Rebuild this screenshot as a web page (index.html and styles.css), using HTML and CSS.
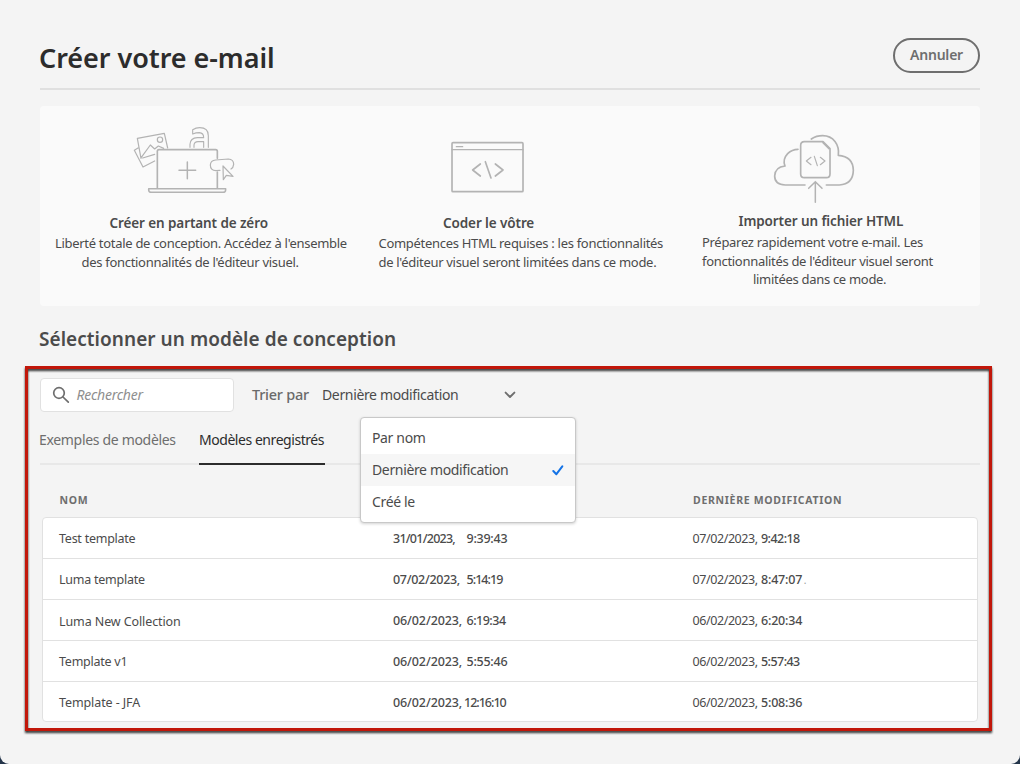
FILE: index.html
```html
<!DOCTYPE html>
<html lang="fr">
<head>
<meta charset="utf-8">
<title>Créer votre e-mail</title>
<link rel="stylesheet" href="styles.css">
</head>
<body>
<div class="page">
  <header class="header">
    <h1 class="title">Créer votre e-mail</h1>
    <button class="cancel">Annuler</button>
  </header>

  <section class="options">
    <article class="option option-scratch">
      <svg class="option-icon" width="130" height="90" viewBox="0 0 390 270">
        <path d="M63 130L52 70L133 55L143 99M54 99L43 106L69 156L104 138M64 127L91 90L104 102L115 93L131 100M68 129L104 118"/>
        <circle cx="120" cy="74" r="8"/>
        <path d="M210 97V88Q211 69 232 68H251Q251 54 238 53Q228 53 218 57V44Q228 38 239 38Q265 38 265 62V97M222 97V90Q223 80 234 80H251V97" stroke-width="3.4"/>
        <path d="M112 219V109Q112 104 117 104H287Q292 104 292 109V130M292 171V219" stroke-width="5"/>
        <path d="M86 221H317V224Q317 232 309 232H94Q86 232 86 224ZM177 166H227M202 141V191" stroke-width="4.5"/>
        <path d="M300 166L288 167Q271 166 271 150Q272 136 287 135L325 132Q341 133 341 148Q340 158 333 162"/>
        <path d="M309 153L310 194L319 181L339 184Z"/>
      </svg>
      <h2 class="option-title">Créer en partant de zéro</h2>
      <p class="option-text"><span class="line">Liberté totale de conception. Accédez à l'ensemble</span> <span class="line line-second">des fonctionnalités de l'éditeur visuel.</span></p>
    </article>
    <article class="option option-code">
      <svg class="option-icon" width="120" height="80" viewBox="0 0 360 240">
        <rect x="66" y="53" width="213" height="147" rx="3" stroke-width="5"/>
        <path d="M66 74H279M79 65H98" stroke-width="4"/>
        <path d="M151 117L128 135L151 153M196 117L219 135L196 153M166 110L183 159" stroke-width="5"/>
      </svg>
      <h2 class="option-title">Coder le vôtre</h2>
      <p class="option-text"><span class="line">Compétences HTML requises : les fonctionnalités</span> <span class="line line-second">de l'éditeur visuel seront limitées dans ce mode.</span></p>
    </article>
    <article class="option option-import">
      <svg class="option-icon" width="110" height="80" viewBox="0 0 330 240">
        <path d="M135 180H76Q44 179 44 153Q45 126 75 123Q67 103 83 86Q96 73 114 73M154 42Q169 32 188 32C220 32 239 59 235 91Q279 94 280 136Q279 178 238 180H199" stroke-width="5"/>
        <path d="M133 50H189L210 71V147Q210 158 199 158H133Q122 158 122 147V61Q122 50 133 50Z" stroke-width="5"/>
        <path d="M189 53L207 71" stroke-width="5"/>
        <path d="M153 97L139 108L153 119M181 97L195 108L181 119M163 94L172 122" stroke-width="3.5"/>
        <path d="M166 232V170M146 190L166 170L186 190" stroke-width="4.5"/>
      </svg>
      <h2 class="option-title">Importer un fichier HTML</h2>
      <p class="option-text"><span class="line">Préparez rapidement votre e-mail. Les</span> <span class="line">fonctionnalités de l'éditeur visuel seront</span> <span class="line line-last">limitées dans ce mode.</span></p>
    </article>
  </section>

  <h2 class="section-title">Sélectionner un modèle de conception</h2>

  <section class="templates">
    <div class="toolbar">
      <label class="search">
        <svg width="18" height="18" viewBox="0 0 18 18"><circle cx="7" cy="7" r="5.3"/><path d="M11 11L16.3 16.2"/></svg>
        <span class="placeholder">Rechercher</span>
      </label>
      <span class="sort-label">Trier par</span>
      <div class="sort">
        <span class="sort-value">Dernière modification</span>
        <svg class="chevron" width="12" height="8" viewBox="0 0 12 8"><path d="M1.6 1.6L6 6L10.4 1.6"/></svg>
        <ul class="menu">
          <li class="menu-item">Par nom</li>
          <li class="menu-item menu-item-selected">Dernière modification
            <svg width="12" height="11" viewBox="0 0 12 11"><path d="M1.3 6L4.4 9.2L10.3 1.4"/></svg>
          </li>
          <li class="menu-item">Créé le</li>
        </ul>
      </div>
    </div>
    <nav class="tabs">
      <span class="tab">Exemples de modèles</span>
      <span class="tab tab-active">Modèles enregistrés</span>
    </nav>
    <div class="columns table-head"><span>NOM</span><span></span><span>DERNIÈRE MODIFICATION</span></div>
    <div class="table">
      <div class="columns row"><span class="name tight">Test template</span><span class="created"><span class="date d31">31/01/2023,</span><span class="t1">9:39:43</span></span><span class="modified"><span class="date">07/02/2023,</span><span class="time tight">9:42:18</span></span></div>
      <div class="columns row"><span class="name tight">Luma template</span><span class="created"><span class="date d07">07/02/2023,</span><span class="t2">5:14:19</span></span><span class="modified"><span class="date">07/02/2023,</span><span class="time">8:47:07</span><span class="speck">.</span></span></div>
      <div class="columns row"><span class="name name-low">Luma New Collection</span><span class="created"><span class="date">06/02/2023,</span><span class="t3">6:19:34</span></span><span class="modified"><span class="date">06/02/2023,</span><span class="time">6:20:34</span></span></div>
      <div class="columns row"><span class="name tight">Template v1</span><span class="created"><span class="date">06/02/2023,</span><span class="t1">5:55:46</span></span><span class="modified"><span class="date">06/02/2023,</span><span class="time tight">5:57:43</span></span></div>
      <div class="columns row"><span class="name">Template - JFA</span><span class="created"><span class="date">06/02/2023,</span><span class="t5">12:16:10</span></span><span class="modified"><span class="date">06/02/2023,</span><span class="time">5:08:36</span></span></div>
    </div>
  </section>
  <div class="highlight"></div>
</div>
</body>
</html>
```
FILE: styles.css
```css
* { box-sizing: border-box; }
body { margin: 0; background: #24354a; font-family: "Noto Sans", sans-serif; color: #4b4b4b; }
h1, h2, p, ul { margin: 0; padding: 0; }
svg { fill: none; stroke-linecap: round; stroke-linejoin: round; flex: none; }
.page { position: relative; height: 764px; padding: 0 40px; background: #f4f4f4; border-radius: 0 0 9px 9px; overflow: hidden; }

.header { height: 90px; display: flex; justify-content: space-between; align-items: flex-start; border-bottom: 2px solid #e0e0e0; }
.title { margin: 38px 0 0 -1px; font-size: 27px; line-height: 40px; font-weight: 600; letter-spacing: -.05px; color: #2c2c2c; }
.cancel { margin-top: 38px; width: 87px; height: 35px; padding: 0 0 1px; border: 2px solid #6e6e6e; border-radius: 18px; background: none; font: 600 14px/20px "Noto Sans", sans-serif; letter-spacing: -.2px; color: #6e6e6e; }

.options { margin-top: 16px; height: 200px; display: grid; grid-template-columns: 323.5px 323.5px 1fr; background: #fafafa; border-radius: 4px; }
.option { padding-left: 15px; display: flex; flex-direction: column; align-items: flex-start; white-space: nowrap; }
.option-icon { stroke: #b3b3b3; stroke-width: 3.6; }
.option-title { margin-top: 8px; font-size: 13.5px; line-height: 20px; font-weight: 600; letter-spacing: -.1px; }
.option-text { font-size: 13px; line-height: 19px; letter-spacing: -.3px; margin-top: 1px; }
.line { display: block; }
.option-scratch .option-icon { margin: 9px 0 0 65px; }
.option-scratch .option-title { margin-left: 54.5px; }
.option-scratch .line-second { margin-left: 26.5px; }
.option-code .option-icon { margin: 19px 0 0 51px; }
.option-code .option-title { margin-left: 64.5px; }
.option-import .option-icon { margin: 19px 0 0 58px; }
.option-import .option-title { margin: 6px 0 0 36.5px; }
.option-import .option-text { line-height: 18.5px; margin-top: 2px; }
.option-import .line-last { margin-left: 51px; }

.section-title { margin: 19px 0 0 -1px; font-size: 19px; line-height: 28px; font-weight: 600; letter-spacing: .05px; }

.toolbar { margin-top: 25px; height: 34px; display: flex; align-items: center; }
.search { width: 194px; height: 34px; padding: 0 0 1px 10.5px; display: flex; align-items: center; gap: 7px; background: #fff; border: 1px solid #e1e1e1; border-radius: 4px; }
.search svg { stroke: #6e6e6e; stroke-width: 1.7; }
.placeholder { padding-bottom: 1px; font-size: 14px; font-style: italic; letter-spacing: -.25px; color: #8e8e8e; }
.sort-label { margin-left: 18px; padding-bottom: 2px; width: 70px; font-size: 14.5px; font-weight: 500; letter-spacing: -.25px; color: #6a6a6a; }
.sort { position: relative; width: 194px; display: flex; justify-content: space-between; align-items: center; font-size: 14px; letter-spacing: -.35px; }
.sort-value { padding-bottom: 2px; }
.chevron { stroke: #6e6e6e; stroke-width: 1.9; }
.menu { position: absolute; z-index: 2; left: 38px; top: 32px; width: 216px; height: 106px; padding-top: 4px; list-style: none; background: #fff; border: 1px solid #c8c8c8; border-radius: 4px; box-shadow: 0 1px 3px rgba(0,0,0,.18); }
.menu-item { height: 32px; padding: 0 11px 1px; display: flex; align-items: center; justify-content: space-between; }
.menu-item-selected { background: #f6f6f6; }
.menu-item svg { margin-top: 3px; stroke: #1473e6; stroke-width: 2; }

.tabs { margin-top: 16px; height: 37px; display: flex; gap: 22px; border-bottom: 2px solid #e8e8e8; font-size: 14px; line-height: 24px; letter-spacing: -.32px; color: #6e6e6e; }
.tab { margin-left: -1px; width: 138px; height: 37px; white-space: nowrap; }
.tab-active { margin-left: 0; width: 126px; color: #2c2c2c; letter-spacing: -.45px; border-bottom: 2px solid #2c2c2c; }

.columns { display: grid; grid-template-columns: 334px 299.5px 1fr; align-items: center; }
.table-head { height: 52px; padding: 17px 0 0 19.5px; font-size: 10.5px; font-weight: 700; letter-spacing: .7px; color: #6e6e6e; }
.table { margin: 0 2px; border: 1px solid #e1e1e1; border-radius: 4px; background: #fff; height: 205px; overflow: hidden; }
.row { height: 41px; padding-left: 16px; border-bottom: 1px solid #e1e1e1; font-size: 12.5px; letter-spacing: -.1px; }
.row:last-child { border-bottom: 0; }
.name-low { padding-top: 2px; }
.name.tight { letter-spacing: -.25px; }
.created, .modified { display: flex; align-items: baseline; white-space: nowrap; }
.created { font-weight: 500; }
.created .date { width: 73.5px; letter-spacing: -.1px; }
.created .d31 { letter-spacing: -.75px; }
.created .d07 { letter-spacing: -.3px; }
.t1 { letter-spacing: -.25px; }
.t2 { letter-spacing: -.95px; }
.t3 { letter-spacing: -.5px; }
.t5 { margin-left: -2.5px; letter-spacing: -1px; }
.modified .date { width: 68.5px; letter-spacing: -.42px; }
.time { font-weight: 500; letter-spacing: -.2px; }
.time.tight { letter-spacing: -.55px; }
.speck { margin-left: 1.5px; color: #999; font-size: 10px; line-height: 12px; }

.highlight { position: absolute; left: 25px; top: 366px; width: 967px; height: 365px; border: 3px solid #c1170a; filter: drop-shadow(0 2px 1px rgba(0,0,0,.8)); pointer-events: none; }
```
